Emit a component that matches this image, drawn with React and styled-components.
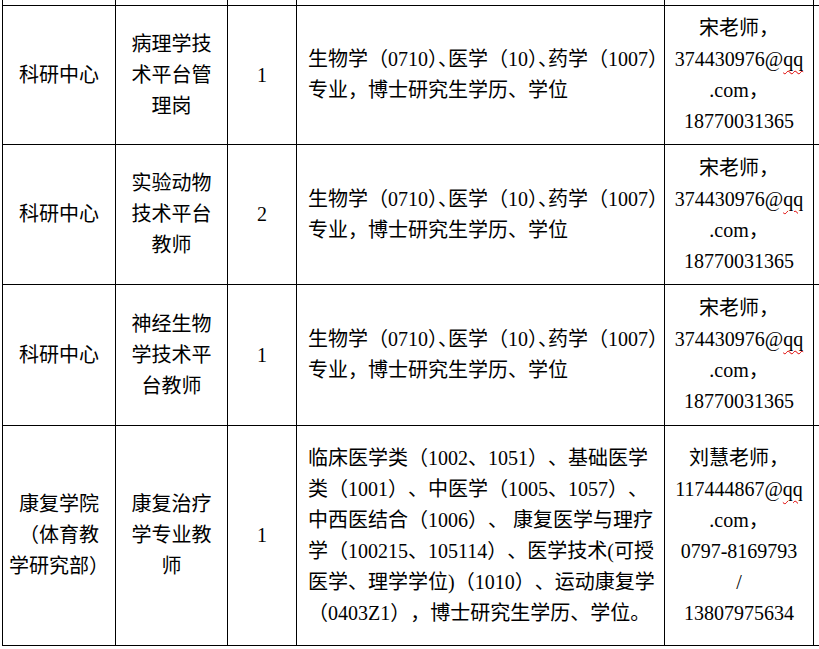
import React from "react"
import styled, { createGlobalStyle } from 'styled-components'

const GlobalStyle = createGlobalStyle`
  html, body {
    margin: 0;
    padding: 0;
    background: #fff;
  }
  body {
    font-family: "Liberation Serif", "Noto Sans CJK SC", serif;
    color: #000;
    text-spacing-trim: space-all;
  }
`

const Page = styled.div`
  width: 819px;
  height: 649px;
  overflow: hidden;
  background: #fff;
`

const Table = styled.div`
  display: grid;
  grid-template-columns: 112px 111px 68px 367px 148px 120px;
  grid-template-rows: 5px 138px 139px 140px 219px;
  gap: 1px;
  padding: 0 0 1px 1px;
  margin-left: 2px;
  width: max-content;
  background: #000;
`

const Cell = styled.div`
  background: #fff;
  display: flex;
  flex-direction: column;
  justify-content: center;
  align-items: ${p => (p.$left ? 'flex-start' : 'center')};
  padding: ${p => (p.$left ? '0 0 0 11px' : '0')};
  font-size: 20px;
  line-height: 31px;
`

const Line = styled.div`
  white-space: pre;
`

const Tight = styled.span`
  font-feature-settings: "halt";
`

const Squiggle = styled.span`
  text-decoration: underline wavy #e00000;
  text-decoration-thickness: 1px;
  text-underline-offset: 4px;
`

const bioReq = [
  <>生物学（0710<Tight>）、</Tight>医学（10<Tight>）、</Tight>药学（1007）</>,
  '专业，博士研究生学历、学位',
]

const songContact = [
  '宋老师，',
  <>374430976@<Squiggle>qq</Squiggle></>,
  '.com，',
  '18770031365',
]

const rows = [
  {
    dept: ['科研中心'],
    post: ['病理学技', '术平台管', '理岗'],
    count: '1',
    req: bioReq,
    contact: songContact,
  },
  {
    dept: ['科研中心'],
    post: ['实验动物', '技术平台', '教师'],
    count: '2',
    req: bioReq,
    contact: songContact,
  },
  {
    dept: ['科研中心'],
    post: ['神经生物', '学技术平', '台教师'],
    count: '1',
    req: bioReq,
    contact: songContact,
  },
  {
    dept: ['康复学院', '（体育教', '学研究部）'],
    post: ['康复治疗', '学专业教', '师'],
    count: '1',
    req: [
      '临床医学类（1002、1051）、基础医学',
      '类（1001）、中医学（1005、1057）、',
      '中西医结合（1006）、 康复医学与理疗',
      '学（100215、105114）、医学技术(可授',
      '医学、理学学位)（1010）、运动康复学',
      '（0403Z1），博士研究生学历、学位。',
    ],
    contact: [
      '刘慧老师，',
      <>117444867@<Squiggle>qq</Squiggle></>,
      '.com，',
      '0797-8169793',
      '/',
      '13807975634',
    ],
  },
]

const Lines = ({ items }) => items.map((t, i) => <Line key={i}>{t}</Line>)

function App() {
  return (
    <Page>
      <GlobalStyle />
      <Table>
        {[0, 1, 2, 3, 4, 5].map(i => <Cell key={'top' + i} />)}
        {rows.map((r, i) => (
          <React.Fragment key={i}>
            <Cell><Lines items={r.dept} /></Cell>
            <Cell><Lines items={r.post} /></Cell>
            <Cell><Line>{r.count}</Line></Cell>
            <Cell $left><Lines items={r.req} /></Cell>
            <Cell><Lines items={r.contact} /></Cell>
            <Cell />
          </React.Fragment>
        ))}
      </Table>
    </Page>
  )
}

export default App
